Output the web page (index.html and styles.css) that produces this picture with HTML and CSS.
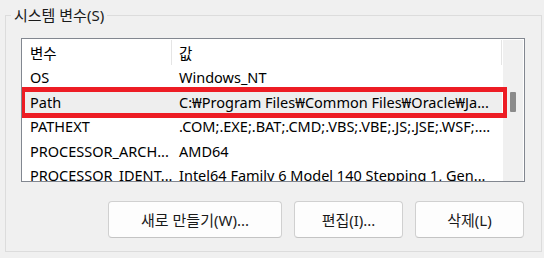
FILE: index.html
```html
<!DOCTYPE html>
<html lang="ko">
<head>
  <meta charset="UTF-8" />
  <title>시스템 변수</title>
  <link rel="stylesheet" href="styles.css">
</head>
<body>
  <fieldset class="group">
    <legend>시스템 변수(S)</legend>
    <div class="listview">
      <div class="rows">
        <div class="row head"><span class="c1">변수</span><span class="c2">값</span></div>
        <div class="row"><span class="c1">OS</span><span class="c2">Windows_NT</span></div>
        <div class="row sel"><span class="c1">Path</span><span class="c2">C:₩Program Files₩Common Files₩Oracle₩Ja...</span></div>
        <div class="row"><span class="c1">PATHEXT</span><span class="c2">.COM;.EXE;.BAT;.CMD;.VBS;.VBE;.JS;.JSE;.WSF;....</span></div>
        <div class="row"><span class="c1">PROCESSOR_ARCH...</span><span class="c2">AMD64</span></div>
        <div class="row"><span class="c1">PROCESSOR_IDENT...</span><span class="c2">Intel64 Family 6 Model 140 Stepping 1, Gen...</span></div>
      </div>
      <div class="scrollbar"><div class="thumb"></div></div>
    </div>
    <div class="buttons">
      <button class="btn btn-new">새로 만들기(W)...</button>
      <button class="btn">편집(I)...</button>
      <button class="btn">삭제(L)</button>
    </div>
  </fieldset>
</body>
</html>
```

FILE: styles.css
```css
body {
  margin: 0;
  background: #f0f0f0;
  font-family: "Noto Sans", "Noto Sans CJK KR", sans-serif;
  font-size: 15px;
  color: #000;
  height: 258px;
  overflow: hidden;
}
.group {
  margin: 5px 2px 5px 5px;
  padding: 0 16px 13px 5px;
  border: 1px solid #dcdcdc;
  min-inline-size: 0;
}
.group legend {
  padding: 0 3px;
  line-height: 20px;
  color: #1a1a1a;
}
.listview {
  display: flex;
  height: 142px;
  margin: 13px 0 0 10px;
  border: 1px solid #828790;
  background: white;
  overflow: hidden;
  font-size: 14.5px;
}
.rows {
  flex: 1;
  min-width: 0;
}
.row {
  display: flex;
  align-items: center;
  height: 24.5px;
  white-space: nowrap;
  position: relative;
}
.row.head {
  height: 26px;
  align-items: stretch;
}
.row.head span {
  display: flex;
  align-items: center;
  border-right: 1px solid #e5e5e5;
  margin-top: 1px;
}
.c1 {
  width: 150px;
  padding-left: 8px;
  box-sizing: border-box;
  overflow: hidden;
}
.c2 {
  flex: 1;
  padding-left: 7px;
  overflow: hidden;
}
.row.sel {
  background: #eeeeee;
}
.row.sel::after {
  content: "";
  position: absolute;
  top: -3px;
  bottom: -4px;
  left: -1px;
  right: -5px;
  border-style: solid;
  border-color: #ed1c24;
  border-width: 5px 4px;
  z-index: 2;
}
.scrollbar {
  width: 20px;
  margin: 1px 1px 0 1px;
  background: #f0f0f0;
}
.thumb {
  width: 6px;
  height: 20px;
  margin: 52px auto 0;
  background: #8b8b8b;
  border-radius: 1px;
}
.buttons {
  display: flex;
  justify-content: flex-end;
  gap: 12px;
  margin: 19px 1px 0 0;
}
.btn {
  width: 109px;
  height: 37px;
  padding: 0;
  font-family: inherit;
  font-size: 15px;
  color: #1a1a1a;
  background: #fdfdfd;
  border: 1px solid #d0d0d0;
  border-bottom-color: #c4c4c4;
  border-radius: 4px;
}
.btn-new {
  width: 174px;
}
```
